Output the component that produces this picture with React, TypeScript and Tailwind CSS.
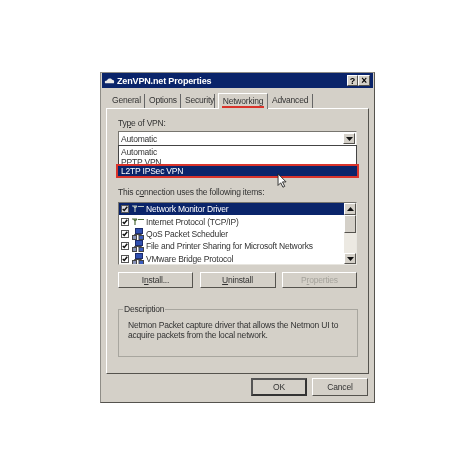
import { ReactNode } from 'react';

const raised = 'border border-t-white border-l-white border-r-[#55534e] border-b-[#55534e] bg-[#d4d0c8]';
const sunken = 'border border-t-[#77756f] border-l-[#77756f] border-r-[#e8e6e0] border-b-[#e8e6e0] bg-white';

const tabs = [
  { label: 'General', cls: 'w-[33px] mr-[4px]' },
  { label: 'Options', cls: 'w-[32px] mr-[4px]' },
  { label: 'Security', cls: 'w-[30px] mr-[3px]' },
  { label: 'Networking', cls: '' },
  { label: 'Advanced', cls: 'w-[41px] ml-[4px]' },
];

const items = [
  { label: 'Network Monitor Driver', icon: 'net' },
  { label: 'Internet Protocol (TCP/IP)', icon: 'net' },
  { label: 'QoS Packet Scheduler', icon: 'pc' },
  { label: 'File and Printer Sharing for Microsoft Networks', icon: 'pc' },
  { label: 'VMware Bridge Protocol', icon: 'pc' },
];

function Check({ inverted }: { inverted?: boolean }) {
  return (
    <span className={`w-[8px] h-[8px] shrink-0 flex items-center justify-center border border-[#555] ${inverted ? 'bg-[#d8d8e0]' : 'bg-white'}`}>
      <svg width="6" height="6" viewBox="0 0 8 8">
        <path d="M1 4l2 2 4-5" fill="none" stroke="#111" strokeWidth="2" />
      </svg>
    </span>
  );
}

function ItemIcon({ kind, selected }: { kind: string; selected: boolean }) {
  if (kind === 'net') {
    const c = selected ? '#b8c4c0' : '#4d6b3a';
    return (
      <svg width="12" height="8" viewBox="0 0 12 8" className="shrink-0">
        <path d="M0 1h5M1.500 1l1.500 2v4M5 1l-2 2M6 1.500h6" fill="none" stroke={c} strokeWidth="1.200" />
      </svg>
    );
  }
  return (
    <svg width="12" height="12" viewBox="0 0 12 12" className="shrink-0">
      <rect x="3.500" y="0.500" width="7" height="5" fill="#2f4fb0" stroke="#1c2b6b" />
      <rect x="0.500" y="7.500" width="4" height="4" fill="#8a94b8" stroke="#444" />
      <rect x="7" y="7.500" width="4.500" height="4" fill="#3a5cc0" stroke="#444" />
      <path d="M7 5.500v2M2.500 7.500V6.500h7v1" fill="none" stroke="#444" />
    </svg>
  );
}

function Scroll({ dir, h }: { dir: 'up' | 'down'; h: string }) {
  return (
    <div className={`w-[12px] shrink-0 flex items-center justify-center ${h} ${raised}`}>
      <svg width="7" height="4" viewBox="0 0 7 4">
        <path d={dir === 'up' ? 'M3.500 0L7 4H0z' : 'M0 0h7L3.500 4z'} fill="#111" />
      </svg>
    </div>
  );
}

function Btn({ children, w, disabled }: { children: ReactNode; w: string; disabled?: boolean }) {
  return (
    <div className={`h-[16px] flex items-center justify-center ${w} ${raised} ${disabled ? 'text-[#a5a39c]' : ''}`}>
      <span>{children}</span>
    </div>
  );
}

export default function App() {
  return (
    <div className="w-[474px] h-[474px] bg-white pt-[72px] pl-[100px] text-[8.500px] tracking-[-0.2px] leading-[10px] text-[#333] [font-family:'Liberation_Sans',sans-serif] blur-[0.5px]">
      <div className="w-[275px] h-[331px] flex flex-col bg-[#d4d0c8] border border-[#8f8d87] border-r-[#55534e] border-b-[#55534e]">
        {/* title bar */}
        <div className="h-[15px] bg-[#0a246a] flex items-center pl-[2px] pr-[3px] ml-[1px] mr-[1px] text-white font-bold text-[9px] tracking-[-0.15px]">
          <svg width="11" height="7" viewBox="0 0 12 8" className="mr-[2px] shrink-0">
            <path d="M1 7c-1-2 0-3 2-3 1-3 5-3 6-1 2 0 3 2 2 4z" fill="#e8e8e8" />
          </svg>
          <span className="flex-1">ZenVPN.net Properties</span>
          <span className={`w-[11px] h-[11px] flex items-center justify-center text-black text-[9px] ${raised}`}>?</span>
          <span className={`w-[12px] h-[11px] flex items-center justify-center text-black text-[10px] ${raised}`}>×</span>
        </div>

        {/* tabs */}
        <div className="flex items-end h-[20px] pl-[11px] shrink-0">
          {tabs.map(t => t.label === 'Networking' ? (
            <div key={t.label} className="h-[16px] w-[50px] flex flex-col items-center pt-[2px] border-t border-l border-t-white border-l-white border-r border-r-[#777] bg-[#d4d0c8] relative top-[1px] z-10">
              <span className="inline-block h-[12px] border-b-2 border-[#d9342b] px-[1px]">{t.label}</span>
            </div>
          ) : (
            <div key={t.label} className={`h-[14px] pt-[1px] border-r border-r-[#666] whitespace-nowrap ${t.cls}`}>
              {t.label}
            </div>
          ))}
        </div>

        {/* panel */}
        <div className="relative ml-[5px] h-[266px] w-[263px] shrink-0 border border-t-white border-l-white border-r-[#55534e] border-b-[#55534e] px-[11px] pt-[9px]">
          <div className="h-[10px]">Ty<u>p</u>e of VPN:</div>
          <div className={`mt-[3px] h-[15px] w-[239px] flex items-center justify-between pl-[2px] pr-[1px] ${sunken}`}>
            <span>Automatic</span>
            <Scroll dir="down" h="h-[11px]" />
          </div>

          {/* combo drop-down */}
          <div className="absolute left-[11px] top-[36px] w-[239px] h-[22px] bg-white border border-[#444] pl-[2px] pt-[2px] leading-[9.500px]">
            <div>Automatic</div>
            <div>PPTP VPN</div>
          </div>
          <div className="absolute left-[9px] top-[55px] w-[243px] h-[14px] bg-[#0a246a] border-2 border-[#d9342b] pl-[3px] text-white flex items-center">
            L2TP IPSec VPN
          </div>
          <svg width="11" height="16" viewBox="0 0 12 18" className="absolute left-[170px] top-[64px]">
            <path d="M1 1v13l3-3 2.500 5 2-1-2.500-5h4z" fill="#fff" stroke="#222" />
          </svg>

          <div className="mt-[41px] h-[10px]">This c<u>o</u>nnection uses the following items:</div>

          <div className={`mt-[5px] h-[63px] w-[239px] flex ${sunken}`}>
            <div className="flex-1 min-w-0 flex flex-col overflow-hidden">
              {items.map((it, i) => (
                <div key={it.label} className={`h-[12.400px] shrink-0 flex items-center pl-[2px] ${i === 0 ? 'bg-[#0a246a] text-white' : ''}`}>
                  <Check inverted={i === 0} />
                  <span className="w-[3px] shrink-0" />
                  <ItemIcon kind={it.icon} selected={i === 0} />
                  <span className="ml-[2px] whitespace-nowrap">{it.label}</span>
                </div>
              ))}
            </div>
            <div className="w-[12px] flex flex-col bg-[#ece9e2]">
              <Scroll dir="up" h="h-[12px]" />
              <div className={`h-[18px] ${raised}`} />
              <div className="flex-1" />
              <Scroll dir="down" h="h-[11px]" />
            </div>
          </div>

          <div className="mt-[7px] flex justify-between w-[239px]">
            <Btn w="w-[75px]">I<u>n</u>stall...</Btn>
            <Btn w="w-[76px]"><u>U</u>ninstall</Btn>
            <Btn w="w-[75px]" disabled>P<u>r</u>operties</Btn>
          </div>

          <fieldset className="mt-[16px] w-[240px] h-[53px] border border-[#a8a69f] pl-[4px] pr-[2px]">
            <legend className="px-[1px] leading-[10px]">Description</legend>
            <p className="mt-[6px] pl-[5px] leading-[10px]">
              Netmon Packet capture driver that allows the Netmon UI to<br />acquire packets from the local network.
            </p>
          </fieldset>
        </div>

        {/* footer */}
        <div className="flex justify-end gap-[5px] pr-[6px] mt-[4px]">
          <div className="w-[56px] h-[18px] flex items-center justify-center border-2 border-t-[#555] border-l-[#555] border-r-[#333] border-b-[#333]">OK</div>
          <div className={`w-[56px] h-[18px] flex items-center justify-center ${raised}`}>Cancel</div>
        </div>
      </div>
    </div>
  );
}
